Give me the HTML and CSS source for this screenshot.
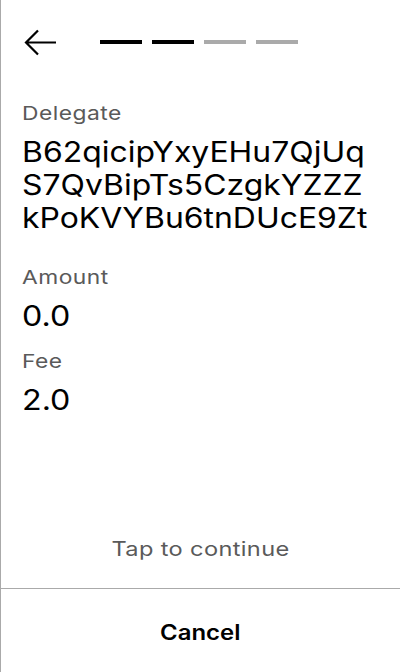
FILE: index.html
```html
<!DOCTYPE html>
<html>
<head>
<meta charset="utf-8">
<link rel="stylesheet" href="styles.css">
</head>
<body>
<div class="screen">
  <header class="top">
    <svg class="back" width="34" height="28" viewBox="0 0 34 28">
      <path d="M33 13.5H3M15 1.5L3 13.5L15 25.5" fill="none" stroke="#000" stroke-width="2.2"/>
    </svg>
    <div class="steps">
      <span class="step on"></span>
      <span class="step on"></span>
      <span class="step"></span>
      <span class="step"></span>
    </div>
  </header>
  <main class="content">
    <div class="label">Delegate</div>
    <div class="value addr"><span class="line">B62qicipYxyEHu7QjUq</span><span class="line">S7QvBipTs5CzgkYZZZ</span><span class="line">kPoKVYBu6tnDUcE9Zt</span></div>
    <div class="label">Amount</div>
    <div class="value">0.0</div>
    <div class="label">Fee</div>
    <div class="value">2.0</div>
  </main>
  <div class="tap">Tap to continue</div>
  <footer class="cancel"><span class="cancel-text">Cancel</span></footer>
</div>
</body>
</html>
```
FILE: styles.css
```css
html, body {
  margin: 0;
  padding: 0;
  background: #fff;
}
body {
  font-family: Inter, "Noto Sans", sans-serif;
  color: #000;
}
.screen {
  width: 399px;
  height: 672px;
  border-left: 1px solid #aaa;
  display: flex;
  flex-direction: column;
  overflow: hidden;
}
.top {
  display: flex;
  align-items: center;
  padding: 29px 0 0 22px;
  height: 28px;
}
.back {
  display: block;
}
.steps {
  display: flex;
  gap: 10px;
  margin-left: 43px;
  margin-top: -3px;
}
.step {
  width: 42px;
  height: 4px;
  background: #aaa;
}
.step.on {
  background: #000;
}
.content {
  padding: 45px 20px 0 21px;
  flex: 1;
}
.label {
  width: max-content;
  font-size: 19px;
  line-height: 24px;
  color: #5a5a5a;
  letter-spacing: 0.4px;
  transform: scaleX(1.2);
  transform-origin: left center;
  margin-bottom: 10px;
}
.value {
  width: max-content;
  font-size: 28px;
  line-height: 33px;
  transform: scaleX(1.15);
  transform-origin: left center;
  margin-bottom: 17px;
}
.addr {
  transform: scaleX(1.14);
  margin-bottom: 31px;
}
.line {
  display: block;
}
.tap {
  text-align: center;
  font-size: 20px;
  color: #5a5a5a;
  line-height: 24px;
  letter-spacing: 0.3px;
  transform: scaleX(1.18);
  padding-bottom: 27px;
}
.cancel {
  border-top: 1px solid #aaa;
  height: 80px;
  padding-top: 3px;
  display: flex;
  align-items: center;
  justify-content: center;
  font-size: 21px;
  font-weight: 600;
}
.cancel-text {
  display: block;
  transform: scaleX(1.14);
}
```
